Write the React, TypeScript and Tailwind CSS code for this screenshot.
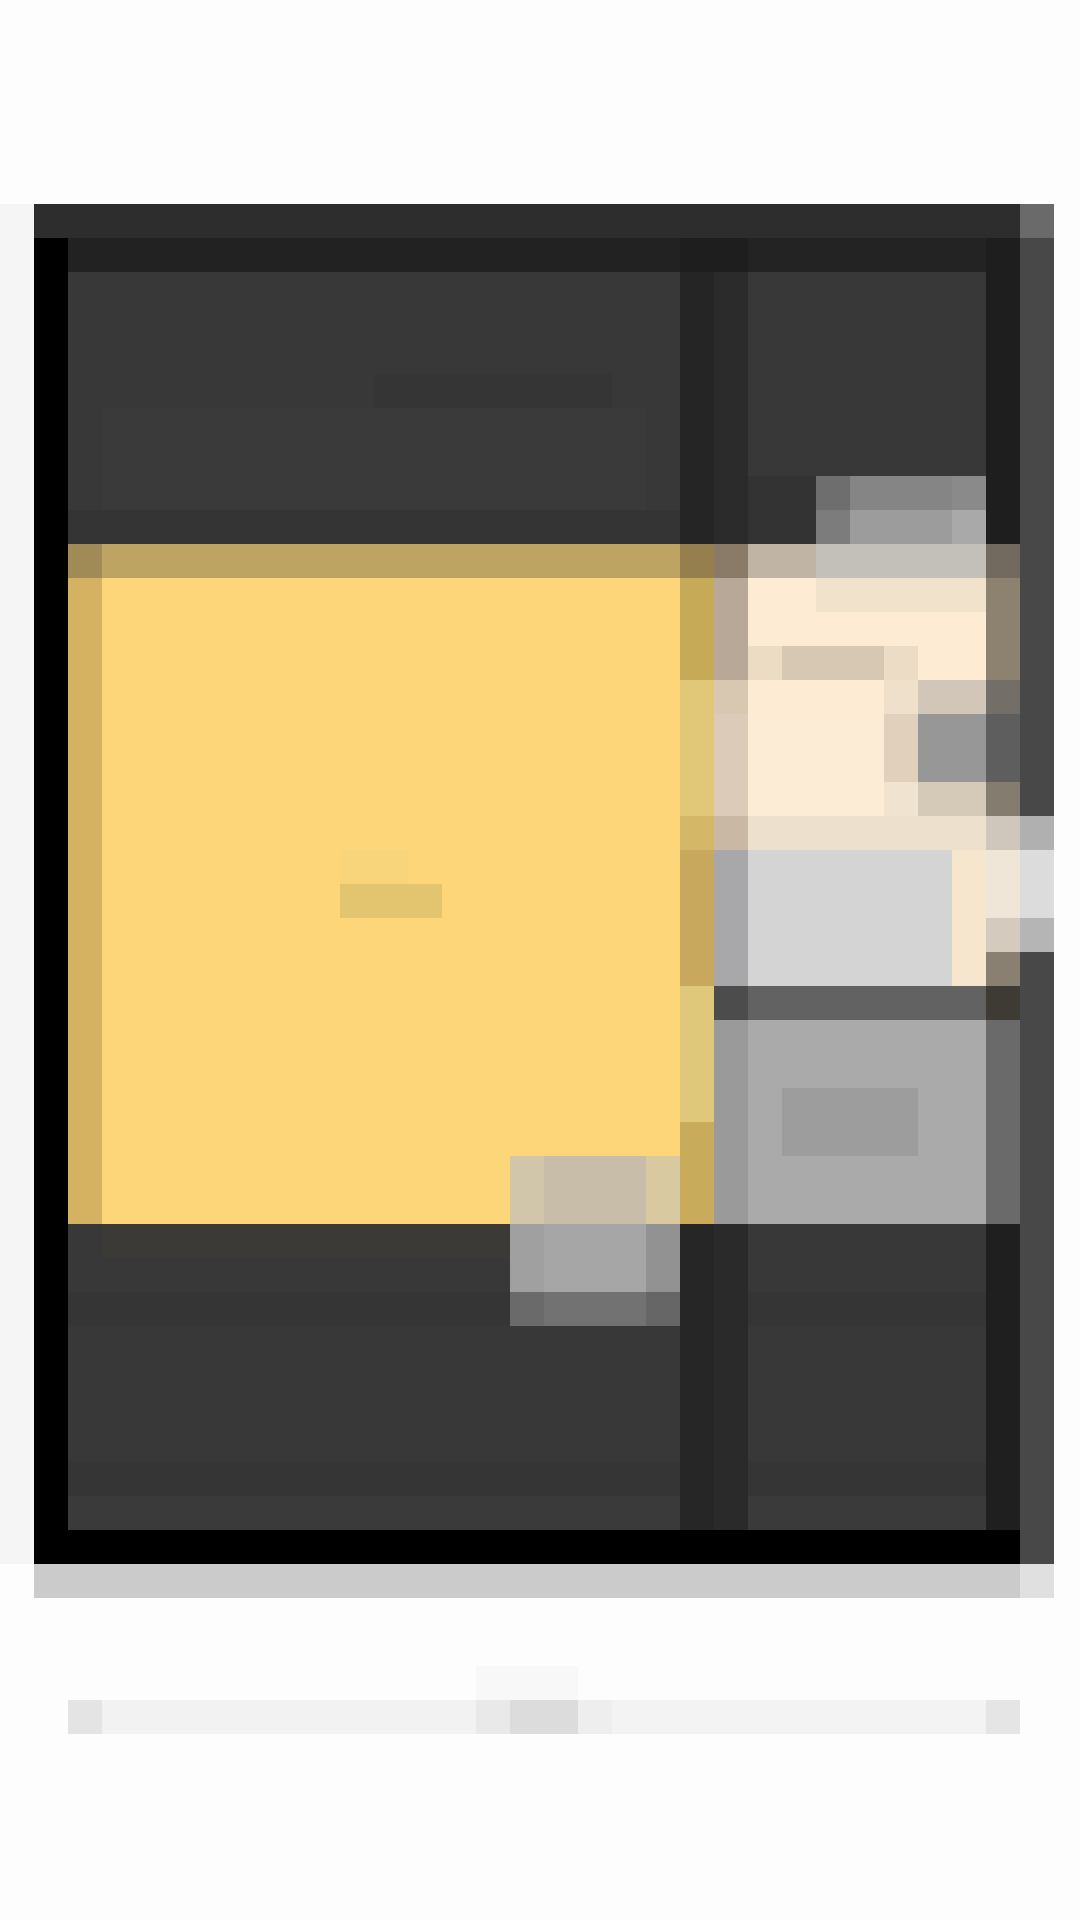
export default function App() {
  return (
    <div className="w-[1080px] h-[1920px] bg-[#fdfdfd] pt-[204px] overflow-hidden">
      <div className="grid grid-cols-[repeat(31,34px)] grid-rows-[repeat(45,34px)]">
        {/* outer frame */}
        <div className="col-start-1 row-start-1 row-span-40 bg-[#f5f5f5]" />
        <div className="col-start-2 col-span-29 row-start-1 bg-[#2d2d2d]" />
        <div className="col-start-31 row-start-1 bg-[#6a6a6a]" />
        <div className="col-start-2 row-start-2 row-span-39 bg-black" />
        <div className="col-start-2 col-span-29 row-start-40 bg-black" />
        <div className="col-start-31 row-start-2 row-span-17 bg-[#484848]" />
        <div className="col-start-31 row-start-19 bg-[#b0b0b0]" />
        <div className="col-start-31 row-start-20 row-span-2 bg-[#dcdcdc]" />
        <div className="col-start-31 row-start-22 bg-[#b5b5b5]" />
        <div className="col-start-31 row-start-23 row-span-18 bg-[#484848]" />
        <div className="col-start-2 col-span-29 row-start-41 bg-[#cbcbcb]" />
        <div className="col-start-31 row-start-41 bg-[#e0e0e0]" />

        {/* header strip */}
        <div className="col-start-3 col-span-18 row-start-2 bg-[#222222]" />
        <div className="col-start-21 col-span-2 row-start-2 bg-[#1e1e1e]" />
        <div className="col-start-23 col-span-7 row-start-2 bg-[#232323]" />
        <div className="col-start-30 row-start-2 row-span-9 bg-[#1e1e1e]" />

        {/* upper canvas */}
        <div className="col-start-3 col-span-18 row-start-3 row-span-8 bg-[#383838]" />
        <div className="col-start-12 col-span-7 row-start-6 bg-[#353535]" />
        <div className="col-start-4 col-span-16 row-start-7 row-span-3 bg-[#3a3a3a]" />
        <div className="col-start-3 col-span-18 row-start-10 bg-[#343434]" />
        <div className="col-start-21 row-start-3 row-span-8 bg-[#252525]" />
        <div className="col-start-22 row-start-3 row-span-8 bg-[#2b2b2b]" />
        <div className="col-start-23 col-span-7 row-start-3 row-span-6 bg-[#383838]" />
        <div className="col-start-23 col-span-2 row-start-9 row-span-2 bg-[#333333]" />
        <div className="col-start-25 row-start-9 bg-[#6e6e6e]" />
        <div className="col-start-26 col-span-3 row-start-9 bg-[#858585]" />
        <div className="col-start-29 row-start-9 bg-[#8a8a8a]" />
        <div className="col-start-25 row-start-10 bg-[#7c7c7c]" />
        <div className="col-start-26 col-span-3 row-start-10 bg-[#9c9c9c]" />
        <div className="col-start-29 row-start-10 bg-[#a9a9a9]" />

        {/* yellow card */}
        <div className="col-start-3 row-start-11 bg-[#a08a55]" />
        <div className="col-start-4 col-span-17 row-start-11 bg-[#bea463]" />
        <div className="col-start-21 row-start-11 bg-[#957f4e]" />
        <div className="col-start-3 row-start-12 row-span-19 bg-[#d4b262]" />
        <div className="col-start-4 col-span-17 row-start-12 row-span-17 bg-[#fdd67a]" />
        <div className="col-start-11 col-span-2 row-start-20 bg-[#f8d57a]" />
        <div className="col-start-11 col-span-3 row-start-21 bg-[#e3c46f]" />
        <div className="col-start-4 col-span-12 row-start-29 row-span-2 bg-[#fdd67a]" />
        <div className="col-start-16 row-start-29 row-span-2 bg-[#d1c5aa]" />
        <div className="col-start-17 col-span-3 row-start-29 row-span-2 bg-[#c8bda8]" />
        <div className="col-start-20 row-start-29 row-span-2 bg-[#d8c9a0]" />
        <div className="col-start-21 row-start-12 row-span-3 bg-[#c6aa58]" />
        <div className="col-start-21 row-start-15 row-span-4 bg-[#e0c878]" />
        <div className="col-start-21 row-start-19 bg-[#d4b868]" />
        <div className="col-start-21 row-start-20 row-span-4 bg-[#c8a85c]" />
        <div className="col-start-21 row-start-24 row-span-4 bg-[#e0c87a]" />
        <div className="col-start-21 row-start-28 row-span-3 bg-[#c9ab5c]" />

        {/* side panel, left edge */}
        <div className="col-start-22 row-start-11 bg-[#8a7a68]" />
        <div className="col-start-22 row-start-12 row-span-3 bg-[#b7a898]" />
        <div className="col-start-22 row-start-15 bg-[#d8c8b2]" />
        <div className="col-start-22 row-start-16 row-span-3 bg-[#dccbb8]" />
        <div className="col-start-22 row-start-19 bg-[#c8b8a4]" />
        <div className="col-start-22 row-start-20 row-span-4 bg-[#a8a8aa]" />
        <div className="col-start-22 row-start-24 bg-[#4c4c4c]" />
        <div className="col-start-22 row-start-25 row-span-6 bg-[#9a9a9a]" />

        {/* side panel, body */}
        <div className="col-start-23 col-span-2 row-start-11 bg-[#c0b5a4]" />
        <div className="col-start-25 col-span-5 row-start-11 bg-[#c3c0ba]" />
        <div className="col-start-23 col-span-2 row-start-12 bg-[#fdebd3]" />
        <div className="col-start-25 col-span-5 row-start-12 bg-[#f1e2cc]" />
        <div className="col-start-23 col-span-7 row-start-13 bg-[#fdebd3]" />
        <div className="col-start-23 row-start-14 bg-[#eddcc4]" />
        <div className="col-start-24 col-span-3 row-start-14 bg-[#d7c8b3]" />
        <div className="col-start-27 row-start-14 bg-[#ecdcc6]" />
        <div className="col-start-28 col-span-2 row-start-14 bg-[#fdebd3]" />
        <div className="col-start-23 col-span-4 row-start-15 bg-[#fdebd3]" />
        <div className="col-start-27 row-start-15 bg-[#eee0cb]" />
        <div className="col-start-28 col-span-2 row-start-15 bg-[#d2c6b8]" />
        <div className="col-start-23 col-span-4 row-start-16 row-span-3 bg-[#fdecd5]" />
        <div className="col-start-27 row-start-16 row-span-2 bg-[#e0d0bc]" />
        <div className="col-start-28 col-span-2 row-start-16 row-span-2 bg-[#979797]" />
        <div className="col-start-27 row-start-18 bg-[#f0e3cf]" />
        <div className="col-start-28 col-span-2 row-start-18 bg-[#d5c9b8]" />
        <div className="col-start-23 col-span-7 row-start-19 bg-[#ede0cc]" />
        <div className="col-start-23 col-span-6 row-start-20 row-span-4 bg-[#d4d4d4]" />
        <div className="col-start-29 row-start-20 row-span-4 bg-[#f5e6cd]" />
        <div className="col-start-23 col-span-7 row-start-24 bg-[#626262]" />
        <div className="col-start-23 col-span-7 row-start-25 row-span-6 bg-[#aaaaaa]" />
        <div className="col-start-24 col-span-4 row-start-27 row-span-2 bg-[#9d9d9d]" />

        {/* side panel, right edge */}
        <div className="col-start-30 row-start-11 bg-[#726a5e]" />
        <div className="col-start-30 row-start-12 row-span-3 bg-[#8d8170]" />
        <div className="col-start-30 row-start-15 bg-[#746e68]" />
        <div className="col-start-30 row-start-16 row-span-2 bg-[#5e5e5e]" />
        <div className="col-start-30 row-start-18 bg-[#857c70]" />
        <div className="col-start-30 row-start-19 bg-[#cfc7bb]" />
        <div className="col-start-30 row-start-20 row-span-2 bg-[#f0e6d8]" />
        <div className="col-start-30 row-start-22 bg-[#d4cabd]" />
        <div className="col-start-30 row-start-23 bg-[#8a8072]" />
        <div className="col-start-30 row-start-24 bg-[#3e3a34]" />
        <div className="col-start-30 row-start-25 row-span-6 bg-[#6a6a6a]" />

        {/* lower canvas */}
        <div className="col-start-3 col-span-18 row-start-31 row-span-9 bg-[#383838]" />
        <div className="col-start-4 col-span-12 row-start-31 bg-[#3c3a36]" />
        <div className="col-start-3 col-span-13 row-start-33 bg-[#353535]" />
        <div className="col-start-3 col-span-18 row-start-38 bg-[#353535]" />
        <div className="col-start-3 col-span-18 row-start-39 bg-[#3a3a3a]" />
        <div className="col-start-16 row-start-31 row-span-2 bg-[#a0a0a0]" />
        <div className="col-start-17 col-span-3 row-start-31 row-span-2 bg-[#a6a6a6]" />
        <div className="col-start-20 row-start-31 row-span-2 bg-[#929292]" />
        <div className="col-start-16 row-start-33 bg-[#6a6a6a]" />
        <div className="col-start-17 col-span-3 row-start-33 bg-[#727272]" />
        <div className="col-start-20 row-start-33 bg-[#666666]" />
        <div className="col-start-21 row-start-31 row-span-9 bg-[#262626]" />
        <div className="col-start-22 row-start-31 row-span-9 bg-[#2a2a2a]" />
        <div className="col-start-23 col-span-7 row-start-31 row-span-9 bg-[#383838]" />
        <div className="col-start-23 col-span-7 row-start-33 bg-[#353535]" />
        <div className="col-start-23 col-span-7 row-start-38 bg-[#353535]" />
        <div className="col-start-23 col-span-7 row-start-39 bg-[#3a3a3a]" />
        <div className="col-start-30 row-start-31 row-span-9 bg-[#1f1f1f]" />

        {/* faint bar below */}
        <div className="col-start-15 col-span-3 row-start-44 bg-[#f8f8f8]" />
        <div className="col-start-3 row-start-45 bg-[#e4e4e4]" />
        <div className="col-start-4 col-span-11 row-start-45 bg-[#f2f2f2]" />
        <div className="col-start-15 row-start-45 bg-[#e9e9e9]" />
        <div className="col-start-16 col-span-2 row-start-45 bg-[#dcdcdc]" />
        <div className="col-start-18 row-start-45 bg-[#eeeeee]" />
        <div className="col-start-19 col-span-11 row-start-45 bg-[#f3f3f3]" />
        <div className="col-start-30 row-start-45 bg-[#e5e5e5]" />
      </div>
    </div>
  );
}
